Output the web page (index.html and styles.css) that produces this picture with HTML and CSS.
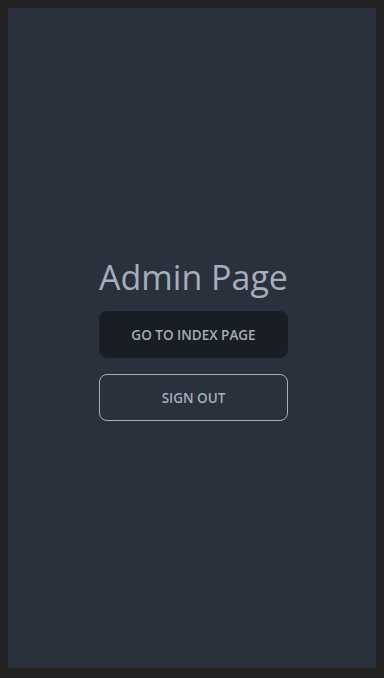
FILE: index.html
```html
<!DOCTYPE html>
<html lang="en">
<head>
  <meta charset="UTF-8" />
  <meta name="viewport" content="width=device-width, initial-scale=1" />
  <title>Admin Page</title>
  <link rel="stylesheet" href="styles.css">
</head>
<body>
  <main class="panel">
    <div class="admin">
      <h1 class="admin-title">Admin Page</h1>
      <button class="btn btn-dark">Go to index page</button>
      <button class="btn btn-outline">Sign out</button>
    </div>
  </main>
</body>
</html>
```

FILE: styles.css
```css
body {
  margin: 0;
  background-color: #222222;
  font-family: 'Open Sans', 'Noto Sans', sans-serif;
  color: #a6adbb;
}
.panel {
  margin: 8px 8px 10px;
  height: 660px;
  padding-left: 3px;
  background-color: #2a303c;
  display: flex;
  align-items: center;
  justify-content: center;
}
.admin {
  margin-top: 2px;
  display: flex;
  flex-direction: column;
  align-items: center;
  gap: 16px;
}
.admin-title {
  margin: 0 0 -2px;
  font-size: 34px;
  font-weight: 400;
  line-height: 40px;
  color: #a6adbb;
}
.btn {
  width: 189px;
  height: 47px;
  border-radius: 8px;
  font-family: inherit;
  font-size: 13.5px;
  font-weight: 600;
  text-transform: uppercase;
  color: #a6adbb;
  cursor: pointer;
}
.btn-dark {
  background-color: #191d24;
  border: 1px solid #191d24;
}
.btn-outline {
  background: transparent;
  border: 1px solid #a6adbb;
}
```
